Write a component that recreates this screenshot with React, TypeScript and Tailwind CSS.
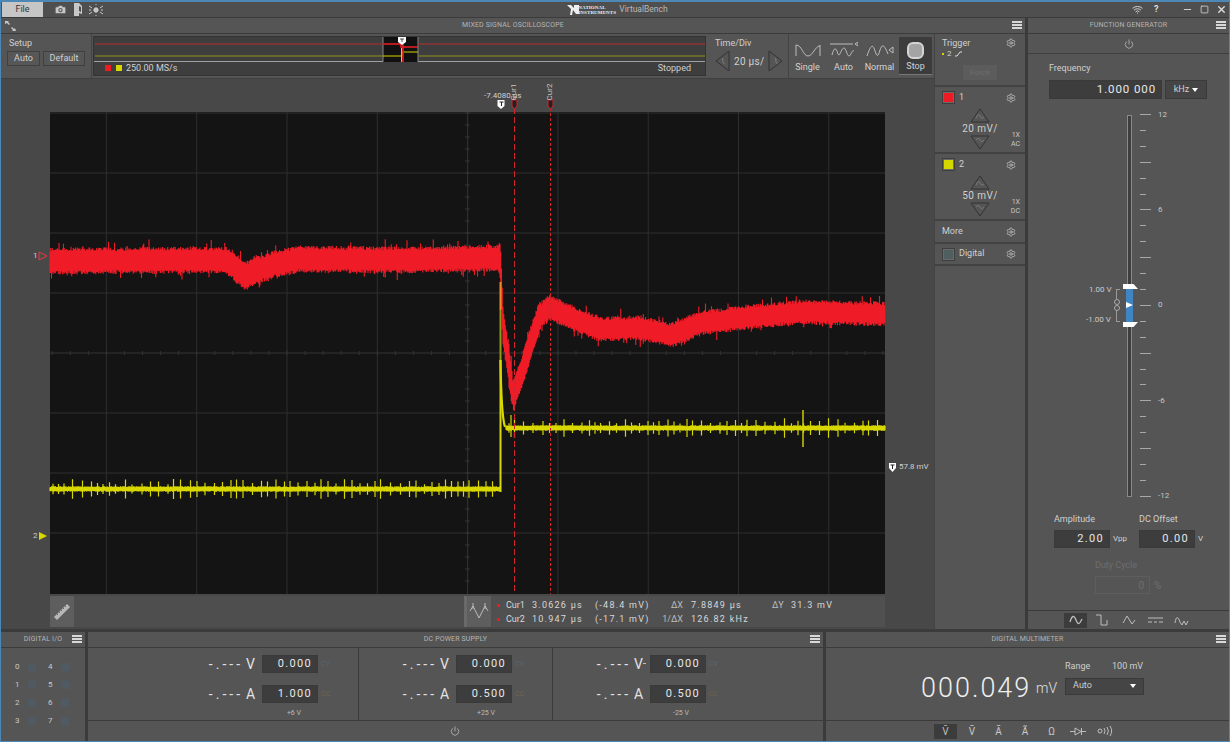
import { Camera, Power, Settings, Wifi, X, Minus, Square } from 'lucide-react';
import type { ReactNode } from 'react';

const FONT = "Roboto, 'Open Sans', sans-serif";

// seeded so the noise looks the same on every load
function makeRandom(seed: number) {
  let s = seed;
  return () => {
    s = (s * 16807) % 2147483647;
    return (s - 1) / 2147483646;
  };
}

function lerp(points: number[][], x: number) {
  for (let i = 1; i < points.length; i++) {
    if (x <= points[i][0]) {
      const [x0, y0] = points[i - 1];
      const [x1, y1] = points[i];
      return y0 + ((y1 - y0) * (x - x0)) / (x1 - x0);
    }
  }
  return points[points.length - 1][1];
}

const redPoints = [
  [50, 261], [225, 260], [232, 264], [245, 276], [258, 270], [275, 264], [300, 259], [400, 260], [499, 258],
  [500.5, 262], [503, 325], [513, 395], [522, 372], [530, 345], [540, 316], [550, 307], [570, 317], [600, 329],
  [640, 328], [672, 335], [700, 323], [750, 317], [800, 312], [885, 314],
];

function buildRed() {
  const rnd = makeRandom(4711);
  let d = '';
  for (let x = 50; x <= 885; x += 0.75) {
    const c = lerp(redPoints, x);
    const slope = Math.abs(lerp(redPoints, x + 1) - c);
    const hw = (x > 500 ? 8.5 : 9.5) + Math.min(slope * 1.6, 7);
    const up = hw + rnd() * 4 + (rnd() > 0.92 ? rnd() * 8 : 0);
    const down = hw + rnd() * 4 + (rnd() > 0.92 ? rnd() * 8 : 0);
    d += `M${x} ${(c - up).toFixed(1)}V${(c + down).toFixed(1)}`;
  }
  return d;
}

function buildYellow(x0: number, x1: number, base: number) {
  const rnd = makeRandom(x0 * 13 + 7);
  let d = '';
  let next = x0 + 3;
  for (let x = x0; x <= x1; x += 0.5) {
    d += `M${x} ${(base - 1.6 - rnd() * 1.2).toFixed(1)}V${(base + 1.6 + rnd() * 1.2).toFixed(1)}`;
    if (x >= next) {
      const amp = 4.5 + rnd() * 5.5;
      d += `M${x} ${(base - amp).toFixed(1)}V${(base + amp).toFixed(1)}`;
      next = x + 5 + rnd() * 5;
    }
  }
  return d;
}

const redPath = buildRed();
const yellowLeft = buildYellow(50, 500, 489);
const yellowRight = buildYellow(506, 885, 428);

const gridX = [-4, -3, -2, -1, 1, 2, 3, 4].map((k) => 467.6 + k * 90.3);
const gridY = [-4, -3, -2, -1, 1, 2, 3].map((k) => 353 + k * 60);

function MenuBars() {
  return (
    <span className="flex w-[10px] flex-col gap-[1px]">
      <span className="h-[2px] bg-[#d8d8d8]" />
      <span className="h-[2px] bg-[#d8d8d8]" />
      <span className="h-[2px] bg-[#d8d8d8]" />
    </span>
  );
}

function PanelHeader({ title }: { title?: string }) {
  return (
    <div className="relative flex h-[16px] shrink-0 items-center border-b border-[#3b3b3b] bg-[#555]">
      <span className="flex-1 text-center text-[7px] tracking-[0.15px] text-[#b4b4b4]">{title}</span>
      <span className="absolute right-[3px] top-[3px]"><MenuBars /></span>
    </div>
  );
}

function Field({ value, className = '', tracking = 'tracking-[1.3px]' }: { value: string; className?: string; tracking?: string }) {
  return (
    <div className={`flex items-center justify-end border border-[#3a3a3a] bg-[#3d3d3d] pr-[5px] text-[#e8e8e8] ${tracking} ${className}`}>
      {value}
    </div>
  );
}

function WaveIcon({ d, w = 22, h = 14, sw = 1 }: { d: string; w?: number; h?: number; sw?: number }) {
  return (
    <svg width={w} height={h} viewBox={`0 0 ${w} ${h}`} fill="none" stroke="#bdbdbd" strokeWidth={sw}>
      <path d={d} />
    </svg>
  );
}

function Gear() {
  return <Settings size={10} strokeWidth={2} className="text-[#bdbdbd]" />;
}

function ModeButton({ label, d, active }: { label: string; d?: string; active?: boolean }) {
  return (
    <div className={`flex h-[38px] w-[33px] flex-col items-center justify-between pb-[1px] pt-[5px] text-[9px] text-[#d4d4d4] ${active ? 'border-b border-[#777] bg-[#3c3c3c]' : ''}`}>
      {d ? (
        <WaveIcon d={d} w={28} h={18} />
      ) : (
        <span className="h-[17px] w-[17px] rounded-[6px] border-[2px] border-[#d4d4d4] bg-[#a4a4a4]" />
      )}
      <span>{label}</span>
    </div>
  );
}

function Arrow({ dir, wave }: { dir: 'up' | 'down' | 'left' | 'right'; wave?: boolean }) {
  const pts = { up: '1,14 10,1 19,14', down: '1,1 10,14 19,1', left: '14,0 1,10 14,20', right: '1,0 14,10 1,20' }[dir];
  const horizontal = dir === 'left' || dir === 'right';
  return (
    <svg width={horizontal ? 15 : 20} height={horizontal ? 20 : 15} fill="#555" stroke="#333" strokeWidth="1">
      <polygon points={pts} />
      {wave && (
        <path
          d={horizontal ? 'M7 7c2 1 0 3 1 4s1 1 1 2' : dir === 'up' ? 'M6 10c2-4 3-4 4-2s2 3 4 1' : 'M6 5c2-2 3-2 4 0s2 2 4 0'}
          fill="none"
          stroke="#888"
          strokeWidth="0.8"
        />
      )}
    </svg>
  );
}

function ChannelCard({ name, color, scale, coupling }: { name: string; color: string; scale: string; coupling: string }) {
  return (
    <div className="relative h-[67px] shrink-0 border-b-2 border-[#424242] px-[7px] pt-[4px] text-[#d0d0d0]">
      <div className="flex items-center justify-between">
        <div className="flex items-center gap-[4px] text-[9px]">
          <span className="flex h-[13px] w-[13px] items-center justify-center border border-[#3e3e3e] bg-[#6a6a6a]">
            <span className={`h-[9px] w-[9px] ${color}`} />
          </span>
          {name}
        </div>
        <span className="mr-[2px]"><Gear /></span>
      </div>
      <div className="mt-[3px] flex flex-col items-center">
        <Arrow dir="up" wave />
        <span className="text-[10px] leading-[12px] tracking-[0.4px]">{scale}</span>
        <Arrow dir="down" wave />
      </div>
      <div className="absolute bottom-[3px] right-[5px] text-right text-[7px] leading-[9px] text-[#c8c8c8]">
        1X<br />{coupling}
      </div>
    </div>
  );
}

function Readout({ value, unit, field, state, stateColor, dash }: { value: string; unit: string; field: string; state: string; stateColor: string; dash?: boolean }) {
  return (
    <div className="flex h-[18px] items-center justify-end">
      <span className="mr-[3px] text-[14px] tracking-[3px] text-[#e2e2e2]">{value}</span>
      <span className="relative mr-[8px] w-[8px] text-[14px] text-[#e2e2e2]">
        {unit}
        {dash && <span className="absolute left-[9px] top-[9px] h-[1px] w-[3px] bg-[#bbbbbb]" />}
      </span>
      <Field value={field} className="h-[18px] w-[56px] text-[11px]" />
      <span className={`ml-[3px] w-[11px] text-[7px] ${stateColor}`}>{state}</span>
    </div>
  );
}

function SupplyChannel({ label, a, pr, divider = true, width, dash }: { label: string; a: string; pr: string; divider?: boolean; width: string; dash?: boolean }) {
  return (
    <div className={`flex flex-col items-stretch pt-[7px] ${pr} ${width} ${divider ? 'border-r border-[#3b3b3b]' : ''}`}>
      <Readout value="-.---" unit="V" field="0.000" state="CV" stateColor="text-[#5a6670]" dash={dash} />
      <div className="h-[12px]" />
      <Readout value="-.---" unit="A" field={a} state="CC" stateColor="text-[#6e6450]" />
      <div className="mt-[5px] pr-[31px] text-right text-[7px] text-[#bbbbbb]">{label}</div>
    </div>
  );
}

function IoPin({ n }: { n: number }) {
  return (
    <div className="flex h-[12px] items-center gap-[7px]">
      <span className="w-[6px] text-[8px] text-[#c8c8c8]">{n}</span>
      <span className="h-[8px] w-[8px] bg-[#4f5a62]" />
    </div>
  );
}

function TabRow({ children }: { children: ReactNode }) {
  return <div className="flex h-[19px] shrink-0 items-center justify-center border-t border-[#3b3b3b] bg-[#555]">{children}</div>;
}

function Tab({ children, active }: { children: ReactNode; active?: boolean }) {
  return (
    <span className={`flex h-[15px] w-[23px] items-center justify-center text-[10px] text-[#c8c8c8] ${active ? 'bg-[#3c3c3c]' : ''}`}>
      {children}
    </span>
  );
}

function Tick({ major, label }: { major: boolean; label?: string }) {
  return (
    <div className="flex h-[1px] items-center">
      <span className={`h-[1px] bg-[#a8a8a8] ${major ? 'w-[11px]' : 'w-[6px]'}`} />
      {label && <span className="ml-[7px] text-[8px] text-[#c8c8c8]">{label}</span>}
    </div>
  );
}

const tickLabels: Record<number, string> = { 0: '12', 6: '6', 12: '0', 18: '-6', 24: '-12' };

function CursorRow({ name, t, v, dl, d, dyl, dy }: { name: string; t: string; v: string; dl: string; d: string; dyl?: string; dy?: string }) {
  return (
    <div className="flex h-[14px] items-center whitespace-nowrap text-[9px] tracking-[1.25px] text-[#d8d8d8]">
      <span className="ml-[6px] h-[3px] w-[3px] bg-[#ed1c24]" />
      <span className="ml-[6px] w-[26px] tracking-normal">{name}</span>
      <span className="w-[63px]">{t}</span>
      <span className="w-[63px]">{v}</span>
      <span className="w-[25px] text-right tracking-normal text-[#bdbdbd]">{dl}</span>
      <span className="ml-[8px] w-[81px]">{d}</span>
      <span className="w-[19px] tracking-normal text-[#bdbdbd]">{dyl}</span>
      <span>{dy}</span>
    </div>
  );
}

function Scope() {
  return (
    <div className="relative h-[482px] w-[835px] shrink-0">
      <svg viewBox="50 112 835 482" className="absolute inset-0 h-[482px] w-[835px] overflow-visible">
        <rect x="50" y="112" width="835" height="482" fill="#141414" />
        {gridX.map((x) => <line key={x} x1={x} x2={x} y1="112" y2="594" stroke="#2e2e2e" />)}
        {gridY.map((y) => <line key={y} x1="50" x2="885" y1={y} y2={y} stroke="#2e2e2e" />)}
        <line x1="467.6" x2="467.6" y1="112" y2="594" stroke="#343434" />
        <line x1="50" x2="885" y1="353" y2="353" stroke="#343434" />
        {Array.from({ length: 50 }, (_, i) => 16.1 + i * 18.06).filter((x) => x > 50 && x < 885).map((x) => (
          <line key={x} x1={x} x2={x} y1="351" y2="355" stroke="#333" />
        ))}
        {Array.from({ length: 40 }, (_, i) => 113 + i * 12).map((y) => (
          <line key={y} x1="465" x2="470" y1={y} y2={y} stroke="#333" />
        ))}
        <path d={redPath} stroke="#ef1c27" strokeWidth="1.1" />
        <path d={yellowLeft} stroke="#d8d800" strokeWidth="1.2" />
        <path d={yellowRight} stroke="#d8d800" strokeWidth="1.2" />
        <path d="M500.5 492V360" stroke="#d8d800" strokeWidth="2" />
        <path d="M500.5 360C501 395 502 418 505 427" stroke="#d8d800" strokeWidth="2.2" fill="none" />
        <path d="M500.5 310V360" stroke="#8f9a10" strokeWidth="2" />
        <path d="M500.5 282V310" stroke="#f08a24" strokeWidth="2" />
        <path d="M803 410V447" stroke="#d8d800" strokeWidth="1.4" />
        <path d="M511 415V437" stroke="#d8d800" strokeWidth="1.2" />
        <line x1="514.5" x2="514.5" y1="108" y2="594" stroke="#d0242c" strokeDasharray="6 3" />
        <line x1="550.5" x2="550.5" y1="108" y2="594" stroke="#d0242c" strokeDasharray="3 2" />
        {/* markers around the plot */}
        <path d="M497.5 100h7v6l-3.5 3l-3.5-3z" fill="#fff" />
        <path d="M499.5 102h4M501.5 102v4" stroke="#222" />
        <path d="M512 100h5v6l-2.5 3l-2.5-3z" fill="#222" stroke="#c8242c" />
        <path d="M548 100h5v6l-2.5 3l-2.5-3z" fill="#222" stroke="#c8242c" />
        <path d="M39 252l8 4l-8 4z" fill="#4a4a4a" stroke="#e8383f" />
        <path d="M39 532l8 4l-8 4z" fill="#d8d800" />
        <path d="M889 463h7v5l-3.5 4l-3.5-4z" fill="#fff" />
        <path d="M890.5 465h4M892.5 465v4" stroke="#222" />
      </svg>
      <span className="absolute left-[434px] top-[-22px] whitespace-nowrap text-[8px] text-[#d0d0d0]">-7.4080 µs</span>
      <span className="absolute left-[456px] top-[-26px] origin-center -rotate-90 text-[8px] text-[#c8c8c8]">Cur1</span>
      <span className="absolute left-[492px] top-[-26px] origin-center -rotate-90 text-[8px] text-[#c8c8c8]">Cur2</span>
      <span className="absolute left-[-17px] top-[138px] text-[8px] text-[#d0d0d0]">1</span>
      <span className="absolute left-[-17px] top-[418px] text-[8px] text-[#d0d0d0]">2</span>
      <span className="absolute left-[849px] top-[349px] whitespace-nowrap text-[8px] text-[#d0d0d0]">57.8 mV</span>
    </div>
  );
}

export default function App() {
  return (
    <div className="flex h-[742px] w-[1230px] flex-col overflow-hidden border border-t-2 border-[#4d87b5] bg-[#3b3b3b]" style={{ fontFamily: FONT }}>
      {/* title bar */}
      <div className="relative flex h-[15px] shrink-0 items-center bg-[#4f4f4f]">
        <div className="ml-[1px] flex h-[15px] w-[41px] items-center justify-center bg-[#c6c6c6] text-[9px] text-[#333]">File</div>
        <div className="ml-[11px] flex items-center gap-[6px] text-[#c8c8c8]">
          <Camera size={13} fill="#c8c8c8" stroke="#555" />
          <svg width="10" height="13" viewBox="0 0 10 13" fill="#c8c8c8"><path d="M1 0h5l3 3v8l-3-1v3H1zM6 3v5l2 1V4z" /></svg>
          <svg width="14" height="12" viewBox="0 0 14 12" fill="none" stroke="#c8c8c8"><circle cx="7" cy="6" r="2.2" fill="#c8c8c8" /><path d="M0 2l3 2M14 2l-3 2M0 10l3-2M14 10l-3-2M7 0v1M7 11v1M0 6h2M12 6h2" /></svg>
        </div>
        <div className="flex-1" />
        <div className="flex items-center">
          <svg width="12" height="11" viewBox="0 0 12 11" fill="#eeeeee"><path d="M0 1h4l3 3V1h5v9H9L6 6L5 11H3L4 5z" /></svg>
          <span className="ml-[-1px] w-[36px] text-[5px] font-bold leading-[5px] tracking-[0.1px] text-[#eeeeee]" style={{ fontFamily: "'Liberation Serif', serif" }}>NATIONAL<br />INSTRUMENTS</span>
          <span className="ml-[5px] text-[8.5px] text-[#b8b8b8]">VirtualBench</span>
        </div>
        <div className="flex-1" />
        <div className="flex w-[97px] shrink-0 items-center text-[#dddddd]">
          <Wifi size={11} />
          <span className="ml-[11px] text-[9px] font-bold">?</span>
          <Minus size={11} className="ml-[23px]" strokeWidth={2} />
          <Square size={9} className="ml-[7px]" strokeWidth={2} />
          <X size={11} className="ml-[7px]" strokeWidth={3} />
        </div>
      </div>

      <div className="mt-[1px] flex h-[611px] shrink-0 gap-[3px]">
        {/* oscilloscope */}
        <div className="flex w-[1024px] flex-col bg-[#555]">
          <div className="relative">
            <PanelHeader title="MIXED SIGNAL OSCILLOSCOPE" />
            <svg className="absolute left-[3px] top-[2px]" width="14" height="12" viewBox="0 0 14 12" fill="#c8c8c8">
              <path d="M1 1l4 0l-1 1l2 2l-1 1l-2-2l-2 1zM12 11l-4 0l1-1l-2-2l1-1l2 2l1-1z" />
            </svg>
          </div>
          <div className="flex min-h-0 flex-1">
            <div className="flex w-[933px] shrink-0 flex-col">
              <div className="flex h-[45px] shrink-0 border-b border-[#3f3f3f]">
                <div className="w-[91px] border-r border-[#434343] pl-[6px] pt-[3px] text-[#d0d0d0]">
                  <div className="pl-[2px] text-[9px] leading-[12px]">Setup</div>
                  <div className="mt-[2px] flex gap-[3px] text-[9px]">
                    <span className="flex h-[15px] w-[33px] items-center justify-center border border-[#404040] bg-[#575757]">Auto</span>
                    <span className="flex h-[15px] w-[42px] items-center justify-center border border-[#404040] bg-[#575757]">Default</span>
                  </div>
                </div>
                <div className="ml-[1px] mt-[2px] flex h-[40px] w-[613px] flex-col border border-[#333] bg-[#3e3e3e]">
                  <div className="relative h-[25px] border-b border-[#a0a0a0]">
                    <svg viewBox="93 37 611 25" className="absolute inset-0 h-[25px] w-full">
                      <rect x="382" y="37" width="35" height="25" fill="#111" />
                      <path d="M382 37V62M417 37V62" stroke="#888" />
                      <path d="M94 44H382M417 44H704" stroke="#8c3436" strokeWidth="1.6" />
                      <path d="M94 56H382M417 56H704" stroke="#77772a" strokeWidth="1.4" />
                      <path d="M382 44H400V47H417" stroke="#ed1c24" strokeWidth="1.6" fill="none" />
                      <path d="M382 56H401V52H417" stroke="#d6d600" strokeWidth="1.2" fill="none" />
                      <path d="M402 44V62" stroke="#ed1c24" strokeWidth="1.6" />
                      <path d="M400.5 48V62" stroke="#d6d600" />
                      <path d="M397 37h8v5l-4 3l-4-3z" fill="#fff" />
                      <path d="M399 39h4M401 39v3" stroke="#222" strokeWidth="0.8" />
                    </svg>
                  </div>
                  <div className="flex flex-1 items-center pl-[11px] pr-[14px] text-[9px] text-[#cfcfcf]">
                    <span className="h-[6px] w-[6px] bg-[#ed1c24]" />
                    <span className="ml-[5px] h-[6px] w-[6px] bg-[#d6d600]" />
                    <span className="ml-[4px]">250.00 MS/s</span>
                    <span className="ml-auto">Stopped</span>
                  </div>
                </div>
                <div className="ml-[2px] w-[81px] border-r border-[#434343] pl-[7px] pt-[3px] text-[#d0d0d0]">
                  <div className="text-[9px] leading-[12px]">Time/Div</div>
                  <div className="mt-[2px] flex items-center gap-[4px] text-[10px] tracking-[0.3px]">
                    <Arrow dir="left" wave />
                    <span className="w-[30px] whitespace-nowrap">20 µs/</span>
                    <Arrow dir="right" wave />
                  </div>
                </div>
                <div className="flex flex-1 items-start gap-[3px] pl-[2px] pt-[3px]">
                  <ModeButton label="Single" d="M2 3V14M2 3C8 3 9 14 14 14C19 14 21 4 26 4M26 3V14" />
                  <ModeButton label="Auto" d="M0 2H23M25 2L28 0V4ZM2 13C4 5 6 5 8 12C10 16 11 6 14 6C16 6 17 14 19 14C21 14 22 7 24 9" />
                  <ModeButton label="Normal" d="M1 14C5 2 7 2 9 9C11 15 12 15 14 8C16 2 18 2 22 12M23 8L27 5V11Z" />
                  <ModeButton label="Stop" active />
                </div>
              </div>
              <div className="flex flex-1 flex-col bg-[#484848]">
                <div className="px-[49px] pt-[33px]"><Scope /></div>
                <div className="flex flex-1 pl-[49px] pt-[2px]">
                  <div className="flex h-[31px] w-[24px] items-center justify-center bg-[#5e5e5e]">
                    <svg width="18" height="18" viewBox="0 0 18 18"><path d="M14 1l3 3L4 17l-3-3z" fill="#b8b8b8" /><path d="M4 11l1 1M6 9l1 1M8 7l1 1M10 5l1 1M12 3l1 1" stroke="#666" /></svg>
                  </div>
                  <div className="h-[31px] w-[390px] bg-[#4e4e4e]" />
                  <div className="h-[31px] w-[3px] bg-[#6a6a6a]" />
                  <div className="flex h-[31px] w-[418px] bg-[#505050]">
                    <div className="flex w-[24px] items-center justify-center bg-[#5e5e5e]">
                      <svg width="22" height="24" viewBox="0 0 22 24" fill="none" stroke="#bcbcbc"><path d="M2 11l3-5l6 12l6-12l3 5M5 3v6M17 3v6" /></svg>
                    </div>
                    <div className="flex flex-col justify-center pt-[2px]">
                      <CursorRow name="Cur1" t="3.0626 µs" v="(-48.4 mV)" dl="ΔX" d="7.8849 µs" dyl="ΔY" dy="31.3 mV" />
                      <CursorRow name="Cur2" t="10.947 µs" v="(-17.1 mV)" dl="1/ΔX" d="126.82 kHz" />
                    </div>
                  </div>
                </div>
              </div>
            </div>
            {/* channel column */}
            <div className="flex flex-1 flex-col border-l border-[#434343]">
              <div className="h-[53px] shrink-0 border-b-2 border-[#424242] px-[7px] pt-[3px] text-[#d0d0d0]">
                <div className="flex items-center justify-between">
                  <span className="text-[9px] leading-[12px]">Trigger</span>
                  <span className="mr-[2px]"><Gear /></span>
                </div>
                <div className="flex items-center gap-[3px] text-[8px] leading-[10px]">
                  <span className="h-[2px] w-[2px] bg-[#d6d600]" />2 <svg width="7" height="6"><path d="M0 5h2l3-4h2" stroke="#ddd" fill="none" /></svg>
                </div>
                <div className="mx-auto mt-[6px] flex h-[15px] w-[34px] items-center justify-center bg-[#5c5c5c] text-[8px] text-[#6e6e6e]">Force</div>
              </div>
              <ChannelCard name="1" color="bg-[#ed1c24]" scale="20 mV/" coupling="AC" />
              <ChannelCard name="2" color="bg-[#d6d600]" scale="50 mV/" coupling="DC" />
              <div className="flex h-[23px] shrink-0 items-center justify-between border-b-2 border-[#424242] pl-[7px] pr-[9px] text-[9px] text-[#d0d0d0]">
                More <Gear />
              </div>
              <div className="flex h-[22px] shrink-0 items-center justify-between border-b-2 border-[#424242] pl-[7px] pr-[9px] text-[9px] text-[#d0d0d0]">
                <span className="flex items-center gap-[4px]">
                  <span className="flex h-[13px] w-[13px] items-center justify-center border border-[#3e3e3e] bg-[#6a6a6a]"><span className="h-[9px] w-[9px] bg-[#4f5f5f]" /></span>
                  Digital
                </span>
                <Gear />
              </div>
            </div>
          </div>
        </div>

        {/* function generator */}
        <div className="flex flex-1 flex-col bg-[#555]">
          <PanelHeader title="FUNCTION GENERATOR" />
          <div className="flex h-[20px] shrink-0 items-center justify-center border-b border-[#3f3f3f]">
            <Power size={10} className="text-[#b4b4b4]" />
          </div>
          <div className="relative flex flex-1 flex-col pl-[21px] text-[#d0d0d0]">
            <div className="mt-[8px] text-[9px] leading-[12px]">Frequency</div>
            <div className="mt-[6px] flex gap-[3px]">
              <Field value="1.000 000" tracking="tracking-[0.9px]" className="h-[19px] w-[113px] text-[11.5px]" />
              <div className="flex h-[19px] w-[42px] items-center justify-center gap-[3px] border border-[#3a3a3a] bg-[#454545] text-[9px]">
                kHz <span className="border-x-[3px] border-t-[4px] border-x-transparent border-t-white" />
              </div>
            </div>
            <div className="relative ml-[78px] mt-[16px] flex h-[382px]">
              <div className="relative h-[382px] w-[5px] border border-[#8a8a8a] bg-[#3e3e3e]">
                {/* offset handle */}
                <div className="absolute left-[-5px] top-[168px] h-[5px] w-[15px] bg-white [clip-path:polygon(0_0,70%_0,100%_100%,0_100%)]" />
                <div className="absolute left-[-2px] top-[173px] h-[33px] w-[7px] bg-[#3f85c4]" />
                <div className="absolute left-[-2px] top-[186px] h-0 w-0 border-y-[3px] border-l-[7px] border-y-transparent border-l-white" />
                <div className="absolute left-[-5px] top-[206px] h-[5px] w-[15px] bg-white [clip-path:polygon(0_0,100%_0,70%_100%,0_100%)]" />
                <span className="absolute left-[-39px] top-[169px] whitespace-nowrap text-[8px] leading-[10px] text-[#cccccc]">1.00 V</span>
                <span className="absolute left-[-42px] top-[199px] whitespace-nowrap text-[8px] leading-[10px] text-[#cccccc]">-1.00 V</span>
                <span className="absolute left-[-12px] top-[173px] h-[33px] w-[4px] border-y border-l border-[#999]" />
                <span className="absolute left-[-14px] top-[183px] flex flex-col bg-[#555]">
                  <span className="h-[6px] w-[6px] rounded-full border border-[#aaa]" />
                  <span className="h-[6px] w-[6px] rounded-full border border-[#aaa]" />
                </span>
              </div>
              <div className="ml-[8px] mt-[-1px] flex h-[383px] flex-col justify-between">
                {Array.from({ length: 25 }, (_, i) => <Tick key={i} major={i % 3 === 0} label={tickLabels[i]} />)}
              </div>
            </div>
            <div className="mt-[16px] flex text-[9px]">
              <div className="ml-[5px] w-[85px]">
                <div className="leading-[12px]">Amplitude</div>
                <div className="mt-[5px] flex items-center gap-[3px]">
                  <Field value="2.00" className="h-[18px] w-[56px] text-[11px]" />
                  <span className="text-[8px]">Vpp</span>
                </div>
              </div>
              <div>
                <div className="leading-[12px]">DC Offset</div>
                <div className="mt-[5px] flex items-center gap-[3px]">
                  <Field value="0.00" className="h-[18px] w-[56px] text-[11px]" />
                  <span className="text-[8px]">V</span>
                </div>
              </div>
            </div>
            <div className="ml-[46px] mt-[11px] text-[9px] leading-[12px] text-[#6e6e6e]">Duty Cycle</div>
            <div className="ml-[46px] mt-[5px] flex items-center gap-[4px] text-[10px] text-[#6e6e6e]">
              <div className="flex h-[18px] w-[55px] items-center justify-end border border-[#5e5e5e] pr-[5px]">0</div>
              %
            </div>
          </div>
          <TabRow>
            <div className="flex gap-[3.5px]">
              <Tab active><WaveIcon w={14} h={10} sw={1.3} d="M1 7C3 0 5 0 7 5S10 10 13 4" /></Tab>
              <Tab><WaveIcon w={14} h={12} d="M1 1H6V11H12V6" /></Tab>
              <Tab><WaveIcon w={14} h={10} d="M1 8L5 1L10 9L13 5" /></Tab>
              <Tab><WaveIcon w={15} h={8} d="M0 2H15M0 6H4M6 6H9M11 6H15" /></Tab>
              <Tab><WaveIcon w={15} h={11} d="M1 8C2 1 4 1 6 7L8 10L10 6L12 10L14 6" /></Tab>
            </div>
          </TabRow>
        </div>
      </div>

      {/* bottom row */}
      <div className="mt-[3px] flex min-h-0 flex-1 gap-[3px]">
        <div className="flex w-[84px] shrink-0 flex-col bg-[#555]">
          <PanelHeader title="DIGITAL I/O" />
          <div className="grid grid-cols-[33px_33px] gap-y-[6px] pl-[14px] pt-[13px]">
            {[0, 4, 1, 5, 2, 6, 3, 7].map((n) => <IoPin key={n} n={n} />)}
          </div>
        </div>
        <div className="flex w-[735px] shrink-0 flex-col bg-[#555]">
          <PanelHeader title="DC POWER SUPPLY" />
          <div className="flex h-[73px] shrink-0 border-b border-[#3b3b3b]">
            <SupplyChannel label="+6 V" a="1.000" pr="pr-[26px]" width="w-[271px]" />
            <SupplyChannel label="+25 V" a="0.500" pr="pr-[26px]" width="w-[194px]" />
            <SupplyChannel label="-25 V" a="0.500" pr="pr-[103px]" divider={false} width="w-[270px]" dash />
          </div>
          <div className="flex flex-1 items-center justify-center pr-[2px]">
            <Power size={10} className="text-[#b4b4b4]" />
          </div>
        </div>
        <div className="flex flex-1 flex-col bg-[#555]">
          <PanelHeader title="DIGITAL MULTIMETER" />
          <div className="flex h-[73px] shrink-0 items-center border-b border-[#3b3b3b] pl-[95px]">
            <span className="mt-[7px] w-[110px] whitespace-nowrap text-[27px] font-light leading-[30px] tracking-[2px] text-[#eeeeee]">000.049</span>
            <span className="ml-[5px] mt-[9px] text-[14px] font-light text-[#e0e0e0]">mV</span>
            <div className="ml-[8px] mt-[-14px] w-[79px] text-[9px] text-[#cfcfcf]">
              <div className="flex justify-between pr-[1px] leading-[12px]"><span>Range</span><span>100 mV</span></div>
              <div className="mt-[6px] flex h-[17px] items-center justify-between border border-[#3a3a3a] bg-[#454545] px-[7px]">
                Auto <span className="border-x-[3px] border-t-[4px] border-x-transparent border-t-white" />
              </div>
            </div>
          </div>
          <div className="flex flex-1 items-center justify-center gap-[3.5px] pr-[5px] text-[#c8c8c8]">
            <Tab active>V̄</Tab>
            <Tab>Ṽ</Tab>
            <Tab>Ā</Tab>
            <Tab>Ã</Tab>
            <Tab>Ω</Tab>
            <Tab><WaveIcon w={16} h={9} d="M0 4.5H5M12 4.5H16M5 1V8L11 4.5ZM11.5 1V8" /></Tab>
            <Tab><WaveIcon w={16} h={10} d="M1 5a2 2 0 1 0 4 0a2 2 0 1 0-4 0M7 2a5 5 0 0 1 0 6M10 1a7 7 0 0 1 0 8M13 0a9 9 0 0 1 0 10" /></Tab>
          </div>
        </div>
      </div>
    </div>
  );
}
